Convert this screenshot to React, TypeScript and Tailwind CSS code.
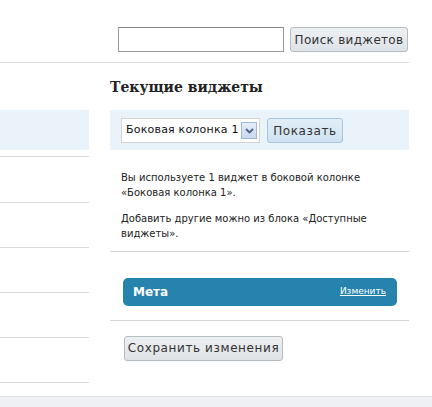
import React from "react";

const sidebarRows = [7, 46, 45, 45, 45, 45];

const App = () => {
  return (
    <div className="relative w-[432px] h-[407px] overflow-hidden bg-white text-[#333] font-['DejaVu_Sans',sans-serif]">
      {/* Search row */}
      <div className="h-[62px] flex justify-end items-start pt-[27px] pr-[24px] gap-[6px]">
        <input
          type="text"
          className="w-[166px] h-[25px] border border-[#999] border-t-[#888] bg-white outline-none"
        />
        <button className="w-[118px] h-[25px] rounded-[3px] border border-[#b5bcc2] bg-gradient-to-b from-[#eef1f3] to-[#dde3e8] text-[12px] tracking-[0.3px] text-[#333]">
          Поиск виджетов
        </button>
      </div>
      <div className="w-[409px] border-t border-[#dcdcdc]" />

      <div className="flex">
        {/* Left column (available widgets list, cut off) */}
        <div className="w-[89px] pt-[47px]">
          <div className="h-[40px] bg-[#eaf2fa]" />
          {sidebarRows.map((h, i) => (
            <div
              key={i}
              className={`border-b border-[#dadada] ${
                i === 0 ? "h-[7px]" : i === 1 ? "h-[46px]" : "h-[45px]"
              }`}
            />
          ))}
        </div>

        {/* Current widgets */}
        <div className="ml-[21px] w-[299px]">
          <div className="h-[47px] flex items-center pt-[2px]">
            <h3 className="font-['DejaVu_Serif',serif] font-bold text-[14px] tracking-[0px] text-[#222]">
              Текущие виджеты
            </h3>
          </div>

          <div className="h-[40px] bg-[#eaf2fa] flex items-center pl-[11px] pt-[1px]">
            <div className="w-[139px] h-[25px] bg-white border border-[#d4d4d4] flex items-center justify-between pl-[4px] pr-[2px]">
              <span className="whitespace-nowrap text-[11px] tracking-[0.2px] text-[#111]">Боковая колонка 1</span>
              <span className="w-[16px] h-[17px] border border-[#9fb8d8] bg-gradient-to-b from-[#e6eefa] to-[#c8d8ee] flex items-center justify-center">
                <svg width="9" height="6" viewBox="0 0 9 6">
                  <path d="M1 1 L4.5 4.5 L8 1" fill="none" stroke="#4d6185" strokeWidth="1.8" />
                </svg>
              </span>
            </div>
            <button className="ml-[7px] w-[76px] h-[25px] rounded-[3px] border border-[#a5c6de] bg-gradient-to-b from-[#e2eef8] to-[#cfe2f1] text-[12px] tracking-[0.6px] text-[#333]">
              Показать
            </button>
          </div>

          <div className="pl-[11px] pt-[20px] text-[10px] leading-[15px] text-[#222]">
            <p>
              Вы используете 1 виджет в боковой колонке
              <br />
              «Боковая колонка 1».
            </p>
            <p className="mt-[11px]">
              Добавить другие можно из блока «Доступные
              <br />
              виджеты».
            </p>
          </div>

          <div className="mt-[10px] border-t border-[#d4d4d4]" />

          <div className="pt-[26px] pb-[14px] pl-[13px]">
            <div className="w-[274px] h-[28px] rounded-[5px] bg-[#2683ae] flex items-center justify-between pl-[10px] pr-[11px]">
              <span className="text-white font-bold text-[12px]">Мета</span>
              <a href="#" className="text-white text-[9px] underline">
                Изменить
              </a>
            </div>
          </div>

          <div className="border-t border-[#d4d4d4]" />

          <div className="pt-[14px] pl-[14px]">
            <button className="w-[159px] h-[25px] rounded-[3px] border border-[#b5bcc2] bg-gradient-to-b from-[#eef0f2] to-[#dfe3e6] text-[12px] tracking-[0.6px] text-[#333]">
              Сохранить изменения
            </button>
          </div>
        </div>
      </div>

      {/* Footer strip */}
      <div className="absolute left-0 right-0 top-[396px] bottom-0 border-t border-[#dfe2e6] bg-[#eef0f4]" />
    </div>
  );
};

export default App;
